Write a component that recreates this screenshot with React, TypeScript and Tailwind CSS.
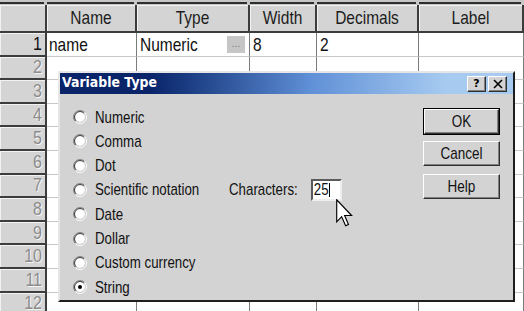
import React from "react";

const COLS = "grid grid-cols-[47px_90px_113px_67px_102px_105px]";
const SANS = "font-['Liberation_Sans',Arial,sans-serif]";

const headers = ["", "Name", "Type", "Width", "Decimals", "Label"];
const options = [
  "Numeric",
  "Comma",
  "Dot",
  "Scientific notation",
  "Date",
  "Dollar",
  "Custom currency",
  "String",
];

function T({ children }: { children: React.ReactNode }) {
  return <span className="inline-block origin-center scale-y-[1.2]">{children}</span>;
}

function Radio({ checked }: { checked?: boolean }) {
  return (
    <svg width="14" height="14" viewBox="0 0 14 14" className="shrink-0">
      <circle cx="7" cy="7" r="5" fill="#ffffff" />
      <path d="M2.404 11.596 A6.5 6.5 0 0 1 11.596 2.404" stroke="#808080" strokeWidth="1" fill="none" />
      <path d="M11.596 2.404 A6.5 6.5 0 0 1 2.404 11.596" stroke="#ffffff" strokeWidth="1" fill="none" />
      <path d="M3.111 10.889 A5.5 5.5 0 0 1 10.889 3.111" stroke="#404040" strokeWidth="1" fill="none" />
      <path d="M10.889 3.111 A5.5 5.5 0 0 1 3.111 10.889" stroke="#d4d4d4" strokeWidth="1" fill="none" />
      {checked && <circle cx="7" cy="7" r="2" fill="#000000" />}
    </svg>
  );
}

function Btn({ children }: { children: React.ReactNode }) {
  return (
    <div className="h-[25px] w-full flex items-center justify-center bg-[#d3d3d3] border border-t-white border-l-white border-r-[#303030] border-b-[#303030] shadow-[inset_-1px_-1px_0_#808080] text-[13.5px] leading-none text-[#111]">
      <T>{children}</T>
    </div>
  );
}

const cell =
  "flex items-center bg-white border-r border-b border-r-[#7c7c7c] border-b-[#c8c8c8] text-[15.5px] leading-none text-[#111]";

export default function App() {
  return (
    <div className={`relative w-[524px] h-[311px] overflow-hidden bg-white ${SANS}`}>
      {/* top strip */}
      <div className={`${COLS} h-[5px] bg-[#c6c6c6]`}>
        {headers.map((_, i) => (
          <div key={i} className="pt-[2px] pr-[3px]">
            <div className="h-[2px] bg-[#2e2e2e]" />
          </div>
        ))}
      </div>
      {/* header row */}
      <div className={`${COLS} h-[28px]`}>
        {headers.map((h, i) => (
          <div
            key={i}
            className="flex items-center justify-center bg-[#d4d4d4] border-r-2 border-b-2 border-[#3c3c3c] shadow-[inset_1px_1px_0_#f2f2f2] text-[15.5px] leading-none text-[#1c1c1c]"
          >
            {h && <T>{h}</T>}
          </div>
        ))}
      </div>
      {/* data rows */}
      {Array.from({ length: 12 }).map((_, r) => (
        <div key={r} className={`${COLS} h-[23.6px]`}>
          <div
            className={`flex items-center justify-end pr-[3px] bg-[#d4d4d4] border-r-2 border-b-2 border-[#3c3c3c] shadow-[inset_1px_1px_0_#f2f2f2] text-[16px] leading-none ${
              r === 0 ? "text-[#111]" : "text-[#8c8c8c] [text-shadow:1px_1px_0_#f4f4f4]"
            }`}
          >
            <T>{r + 1}</T>
          </div>
          <div className={`${cell} pl-[2px]`}>{r === 0 && <T>name</T>}</div>
          <div className={`${cell} pl-[3px] pr-[4px]`}>
            {r === 0 && (
              <>
                <T>Numeric</T>
                <span className="ml-auto w-[18px] h-[17px] flex items-end justify-center pb-[4px] bg-[#c6c6c6] text-[10px] leading-none text-[#7a7a7a]">
                  ...
                </span>
              </>
            )}
          </div>
          <div className={`${cell} pl-[3px]`}>{r === 0 && <T>8</T>}</div>
          <div className={`${cell} pl-[3px]`}>{r === 0 && <T>2</T>}</div>
          <div className={`${cell} pl-[3px]`} />
        </div>
      ))}

      {/* dialog */}
      <div className="absolute left-[58px] top-[71px] w-[457px] h-[231px] flex flex-col bg-[#d3d3d3] border-2 border-t-[#e6e6e6] border-l-[#e6e6e6] border-r-[#1e1e1e] border-b-[#1e1e1e]">
        <div className="h-[21px] shrink-0 flex items-center pl-[2px] pr-[6px] bg-linear-to-r from-[#0a246a] from-20% via-[#5f8fd6] via-55% to-[#a6caf0] to-85%">
          <span className="inline-block scale-y-[1.1] font-['DejaVu_Sans',sans-serif] font-bold text-[12.5px] leading-none text-white">
            Variable Type
          </span>
          <div className="ml-auto flex gap-[2px]">
            <div className="w-[19px] h-[16px] flex items-center justify-center bg-[#d3d3d3] border border-t-white border-l-white border-r-[#303030] border-b-[#303030] shadow-[inset_-1px_-1px_0_#808080] font-['DejaVu_Sans',sans-serif] font-bold text-[11px] leading-none text-black">
              ?
            </div>
            <div className="w-[19px] h-[16px] flex items-center justify-center bg-[#d3d3d3] border border-t-white border-l-white border-r-[#303030] border-b-[#303030] shadow-[inset_-1px_-1px_0_#808080]">
              <svg width="10" height="10" viewBox="0 0 10 10">
                <path d="M1 1 L9 9 M9 1 L1 9" stroke="#000" strokeWidth="1.6" />
              </svg>
            </div>
          </div>
        </div>
        <div className="flex flex-1 pl-[13px] pr-[13px] pt-[11px]">
          <div className="grid grid-cols-[156px_auto] auto-rows-[24.3px]">
            {options.map((o, i) => (
              <React.Fragment key={o}>
                <div className="flex items-center gap-[8px] text-[13.3px] leading-none text-[#111]">
                  <Radio checked={i === 7} />
                  <T>{o}</T>
                </div>
                {i === 3 ? (
                  <div className="flex items-center text-[13.3px] leading-none text-[#111]">
                    <T>Characters:</T>
                    <div className="ml-[13px] w-[31px] h-[22px] flex items-center pl-[1px] bg-white border-2 border-t-[#5a5a5a] border-l-[#5a5a5a] border-r-[#eeeeee] border-b-[#eeeeee]">
                      <T>25</T>
                      <span className="w-[1px] h-[14px] bg-black" />
                    </div>
                  </div>
                ) : (
                  <div />
                )}
              </React.Fragment>
            ))}
          </div>
          <div className="ml-auto w-[77px] flex flex-col pt-[3px]">
            <div className="border border-black">
              <Btn>OK</Btn>
            </div>
            <div className="mt-[6px]">
              <Btn>Cancel</Btn>
            </div>
            <div className="mt-[8px]">
              <Btn>Help</Btn>
            </div>
          </div>
        </div>
      </div>

      {/* mouse cursor */}
      <svg
        className="absolute left-[336px] top-[199px]"
        width="17"
        height="28"
        viewBox="0 0 12 19"
        preserveAspectRatio="none"
      >
        <path d="M0.5 0.5 L0.5 15.5 L4 12 L6.8 18.2 L8.8 17.3 L6.1 11.2 L11 11.2 Z" fill="#ffffff" stroke="#000000" strokeWidth="0.8" />
      </svg>
    </div>
  );
}
